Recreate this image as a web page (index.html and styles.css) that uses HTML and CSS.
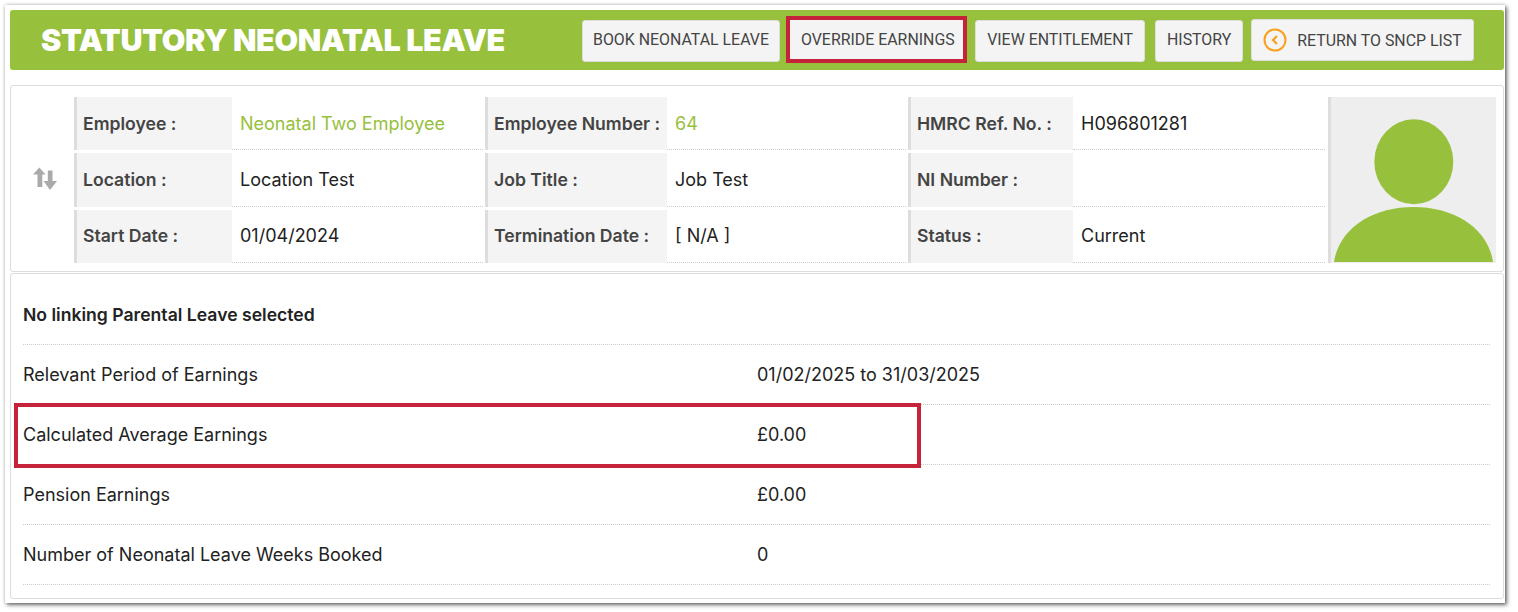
FILE: index.html
```html
<!DOCTYPE html>
<html>
<head>
  <title>Statutory Neonatal Leave</title>
  <meta charset="UTF-8">
  <link rel="stylesheet" href="styles.css">
</head>
<body>
  <div class="window">
    <div class="header">
      <h1>STATUTORY NEONATAL LEAVE</h1>
      <div class="actions">
        <a class="button book">BOOK NEONATAL LEAVE</a>
        <a class="button marked">OVERRIDE EARNINGS</a>
        <a class="button entitlement">VIEW ENTITLEMENT</a>
        <a class="button history">HISTORY</a>
        <a class="button return">
          <svg class="back-icon" width="24" height="24" viewBox="0 0 24 24" fill="none" stroke="#f9a01b" stroke-width="2">
            <circle cx="12" cy="12" r="10.5"/>
            <path d="M14 8 L10 12 L14 16" stroke-width="2.2"/>
          </svg>
          <span class="return-text">RETURN TO SNCP LIST</span>
        </a>
      </div>
    </div>

    <div class="card employee">
      <div class="swap">
        <svg width="24" height="24" viewBox="0 0 24 24" fill="#aaa">
          <path d="M6.3 0.5 L12.6 7.5 H9.3 V20 H4.5 V7.5 H0 Z"/>
          <path d="M17 23 L24 14 H19.5 V3.5 H14.8 V14 H10.5 Z"/>
        </svg>
      </div>
      <div class="details">
        <div class="label">Employee :</div>
        <div class="value link">Neonatal Two Employee</div>
        <div class="label">Employee Number :</div>
        <div class="value link">64</div>
        <div class="label">HMRC Ref. No. :</div>
        <div class="value">H096801281</div>

        <div class="label">Location :</div>
        <div class="value">Location Test</div>
        <div class="label">Job Title :</div>
        <div class="value">Job Test</div>
        <div class="label">NI Number :</div>
        <div class="value"></div>

        <div class="label">Start Date :</div>
        <div class="value">01/04/2024</div>
        <div class="label">Termination Date :</div>
        <div class="value">[ N/A ]</div>
        <div class="label">Status :</div>
        <div class="value">Current</div>
      </div>
      <div class="photo">
        <svg width="165" height="166" viewBox="0 0 165 166" fill="#97c03c">
          <ellipse cx="82.8" cy="64.8" rx="39.5" ry="42.5"/>
          <path d="M3 165 C8 131 42 110 82.5 110 C123 110 157 131 162 165 Z"/>
        </svg>
      </div>
    </div>

    <div class="card summary">
      <div class="row title"><strong>No linking Parental Leave selected</strong></div>
      <div class="row"><span class="name">Relevant Period of Earnings</span><span>01/02/2025 to 31/03/2025</span></div>
      <div class="row"><span class="name">Calculated Average Earnings</span><span>£0.00</span></div>
      <div class="row"><span class="name">Pension Earnings</span><span>£0.00</span></div>
      <div class="row"><span class="name">Number of Neonatal Leave Weeks Booked</span><span>0</span></div>
      <div class="highlight"></div>
    </div>
  </div>
</body>
</html>
```

FILE: styles.css
```css
html, body {
  height: 100%;
}
body {
  font-family: Inter, sans-serif;
  font-size: 18px;
  color: #222;
  margin: 0;
  padding: 5px 0 0 5px;
  box-sizing: border-box;
  background-color: #fff;
  overflow: hidden;
}
.window {
  width: 1500px;
  height: 598px;
  box-sizing: border-box;
  padding: 5px 1px 0 5px;
  background-color: #fff;
  box-shadow: 0 0 3px rgba(0, 0, 0, 0.25), 2px 2px 4px rgba(0, 0, 0, 0.55);
}
.header {
  display: flex;
  align-items: center;
  height: 60px;
  background-color: #97c03c;
  border-radius: 3px;
}
.header h1 {
  margin: -2px 0 0 31px;
  font-size: 30.5px;
  font-weight: 900;
  letter-spacing: -0.35px;
  color: #fff;
  width: 541px;
  white-space: nowrap;
}
.actions {
  display: flex;
  align-items: flex-start;
  align-self: flex-start;
  padding-top: 6px;
}
.button {
  display: flex;
  align-items: center;
  box-sizing: border-box;
  height: 42px;
  margin-top: 4px;
  padding: 0 11px 3px;
  font-family: Roboto, sans-serif;
  font-size: 15.9px;
  color: #444;
  background-color: #f4f4f4;
  border: 1px solid #ddd;
  border-radius: 3px;
  white-space: nowrap;
}
.book {
  padding: 0 10px 3px;
  margin-right: 6px;
}
.button.marked {
  height: 47px;
  margin: 0 8px 0 0;
  padding: 0 8.5px 0 11px;
  border: 4px solid #c4233a;
  border-radius: 0;
}
.entitlement {
  margin-right: 10px;
}
.history {
  margin-right: 8px;
}
.button.return {
  margin-top: 3px;
  padding-bottom: 0;
}
.back-icon {
  margin-right: 10px;
}
.return-text {
  padding-top: 1px;
}
.card {
  background-color: #fff;
  border: 1px solid #ddd;
  border-radius: 3px;
}
.employee {
  display: flex;
  height: 187px;
  box-sizing: border-box;
  margin-top: 15px;
  padding-top: 11px;
}
.swap {
  width: 63px;
  height: 165px;
  display: flex;
  align-items: center;
  justify-content: center;
  padding: 0 0 2px 4px;
  box-sizing: border-box;
}
.details {
  display: grid;
  grid-template-columns: 158px 253px 182px 241px 165px 254px;
  grid-template-rows: 53px 54px 53px;
  row-gap: 3px;
  width: 1254px;
  height: 166px;
}
.label {
  display: flex;
  align-items: center;
  padding-left: 6px;
  font-size: 17.6px;
  font-weight: 600;
  color: #444;
  background-color: #f4f4f4;
  border-left: 3px solid #ddd;
  box-sizing: border-box;
}
.value {
  display: flex;
  align-items: center;
  padding: 1px 0 0 8px;
  margin-right: 2px;
  border-bottom: 1px dotted #ccc;
  box-sizing: border-box;
}
.label:nth-child(n+7) {
  padding-bottom: 1px;
}
.label:nth-child(n+13) {
  padding-bottom: 2px;
}
.value:nth-child(n+7) {
  padding-top: 0;
}
.value:nth-child(n+13) {
  padding-bottom: 1px;
}
.link {
  color: #97c03c;
}
.photo {
  width: 168px;
  height: 166px;
  box-sizing: border-box;
  background-color: #eee;
  border-left: 3px solid #ddd;
}
.photo svg {
  display: block;
}
.summary {
  position: relative;
  height: 326px;
  box-sizing: border-box;
  margin-top: 1px;
  padding: 11px 13px 0 12px;
}
.row {
  display: flex;
  align-items: center;
  height: 60px;
  box-sizing: border-box;
  border-bottom: 1px dotted #ccc;
}
.row .name {
  width: 734px;
}
.row.title strong {
  font-size: 17.6px;
  font-weight: 600;
}
.highlight {
  position: absolute;
  left: 3px;
  top: 129px;
  width: 907px;
  height: 65px;
  box-sizing: border-box;
  border: 4px solid #c4233a;
}
```
